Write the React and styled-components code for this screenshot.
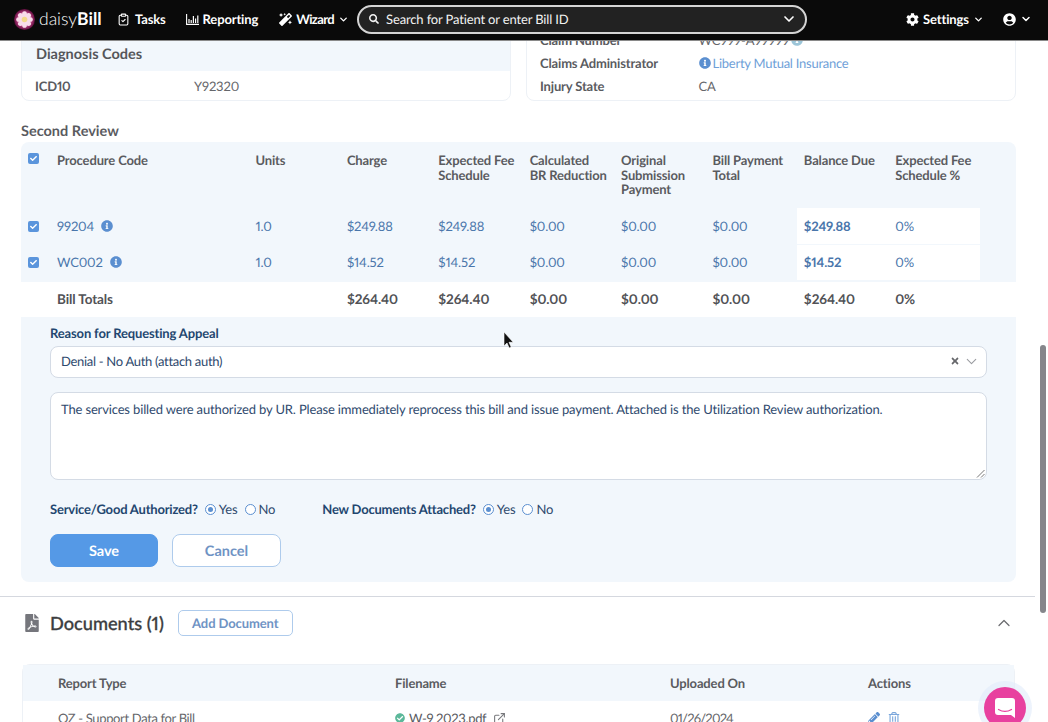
import React from "react";
import styled, { createGlobalStyle } from "styled-components";
import { FaInfoCircle, FaCog, FaUserCircle, FaMagic, FaFilePdf, FaPencilAlt, FaRegTrashAlt, FaCheckCircle, FaCheck, FaTimes, FaSearch } from "react-icons/fa";
import { FiExternalLink, FiChevronDown, FiChevronUp } from "react-icons/fi";
import { LuClipboardCheck } from "react-icons/lu";

const Global = createGlobalStyle`
  html, body { margin: 0; padding: 0; background: #fff; overflow: hidden; }
  * { box-sizing: border-box; }
  body {
    font-family: "Lato", "Liberation Sans", sans-serif; font-size: 13px; color: #55565a;
    letter-spacing: -0.15px; font-variant-numeric: proportional-nums; text-rendering: geometricPrecision;
  }
  button { font-variant-numeric: proportional-nums; text-rendering: geometricPrecision; }
`;

const Shell = styled.div`
  height: 722px; display: flex; flex-direction: column; overflow: hidden; position: relative;
`;
const Nav = styled.header`
  height: 41px; flex: none; background: #0a0a0a; border-bottom: 1px solid #8a8a8a; padding-bottom: 2px;
  display: flex; align-items: center; color: #fff; position: relative; z-index: 2;
`;
const Brand = styled.div`
  display: flex; align-items: center; margin-left: 14px; width: 93px; flex: none; gap: 4px;
`;
const BrandText = styled.span`
  font-size: 17.5px; font-weight: 300; letter-spacing: 0; line-height: 1; color: #fff;
  b { font-weight: 700; }
`;
const NavItem = styled.a`
  display: flex; align-items: center; gap: ${p => p.$gap || 5}px; font-size: 13px; font-weight: 700;
  margin-left: ${p => p.$ml || 0}px; flex: none; color: #fff;
  letter-spacing: ${p => p.$tight ? "-0.6px" : "-0.15px"};
`;
const Search = styled.div`
  width: 450px; height: 29px; margin-left: 8px; flex: none; display: flex; align-items: center;
  background: #222; border: 2px solid #d4d4d4; border-radius: 15px; padding: 0 8px 0 10px; font-size: 13px; color: #f2f2f2; gap: 7px;
`;
const SearchText = styled.span` flex: 1; `;
const Main = styled.main` flex: 1; overflow: hidden; position: relative; `;
const Inner = styled.div` padding: 0 32px 0 21px; `;
const TopCards = styled.div`
  display: grid; grid-template-columns: 490px 490px; gap: 15px; margin-top: -13px;
`;
const Card = styled.section`
  height: 73px; border: 1px solid #edf1f6; border-radius: 8px; overflow: hidden; background: #fff;
`;
const CardHead = styled.div`
  height: 42px; background: #f2f7fc; padding: 17px 14px 0; font-size: 14.5px; font-weight: 700; color: #55565a; line-height: 18px; letter-spacing: 0;
`;
const KV = styled.div`
  display: grid; grid-template-columns: ${p => p.$col}px 1fr; padding-left: 13px; height: ${p => p.$h}px; align-items: center;
`;
const Key = styled.span` font-weight: 700; color: #5a5b5f; `;
const Val = styled.span` color: #66676b; display: flex; align-items: center; gap: 2px; `;
const LinkVal = styled(Val)` color: #6f9fd8; letter-spacing: -0.25px; `;
const RightCard = styled(Card)` padding-top: 0; `;
const Title = styled.h2`
  margin: 22px 0 1px; font-size: 14.5px; line-height: 18px; font-weight: 700; color: #5a5b5f; letter-spacing: 0;
`;
const Panel = styled.div`
  background: #f2f7fc; border-radius: 8px; height: 440px; overflow: hidden;
`;
const COLS = "29px 198.5px repeat(8, 91.4px) 1fr";
const HeadRow = styled.div`
  display: grid; grid-template-columns: ${COLS}; height: 66px; padding-top: 11px;
`;
const HCell = styled.div`
  padding-left: 7px; font-weight: 700; line-height: 14.6px; color: #5a5b5f; font-size: 13px;
`;
const BodyRow = styled.div`
  display: grid; grid-template-columns: ${COLS}; height: 37px; padding-bottom: ${p => p.$pb}px; align-items: stretch;
  & > div { padding-bottom: ${p => p.$pb - 1}px; }
`;
const Cell = styled.div`
  padding-left: 7px; display: flex; align-items: center; gap: 7px; color: #4a76ab;
  background: ${p => p.$white ? "#fff" : "transparent"};
  font-weight: ${p => p.$bold ? 700 : 400};
`;
const CheckCell = styled.div` display: flex; align-items: ${p => p.$top ? "flex-start" : "center"}; padding-left: 7px; `;
const Check = styled.span`
  width: 11px; height: 11px; border-radius: 2px; background: #5b95dc; color: #fff; display: flex; align-items: center; justify-content: center; font-size: 7px;
`;
const TotalRow = styled.div`
  display: grid; grid-template-columns: ${COLS}; height: 35px; background: #fff; align-items: center; padding-bottom: 2px;
`;
const TCell = styled.div` padding-left: 7px; font-weight: 700; color: #515256; font-size: 13.5px; letter-spacing: -0.1px; `;
const Form = styled.div` padding: 8px 29px 15px; `;
const Label = styled.label` display: block; font-weight: 700; color: #23466f; line-height: 16px; font-size: 13px; margin-bottom: 5px; `;
const Select = styled.div`
  height: 32px; width: 937px; background: #fff; border: 1px solid #d4dbe5; border-radius: 8px; padding: 0 6px 2px 10px;
  display: flex; align-items: center; color: #2f4a6e; gap: 3px; letter-spacing: -0.3px;
`;
const SelectVal = styled.span` flex: 1; `;
const TextArea = styled.div`
  width: 937px; height: 88px; margin-top: 14px; background: #fff; border: 1px solid #d4dbe5; border-radius: 8px; padding: 8px 10px;
  color: #2f4a6e; line-height: 16px; position: relative;
`;
const Resize = styled.svg` position: absolute; right: 1px; bottom: 1px; `;
const Radios = styled.div` display: flex; align-items: center; height: 18px; margin-top: 20px; color: #2f4a6e; `;
const RLabel = styled.span` font-weight: 700; color: #23466f; font-size: 13px; letter-spacing: -0.2px; margin-left: ${p => p.$ml || 0}px; `;
const RadioOpt = styled.span` display: flex; align-items: center; gap: 3px; margin-left: 7px; `;
const Dot = styled.span`
  width: 11px; height: 11px; border-radius: 50%; border: 1.5px solid #5b8fd0; display: flex; align-items: center; justify-content: center; background: #fff;
  &::after { content: ""; width: 5px; height: 5px; border-radius: 50%; background: ${p => p.$on ? "#5b8fd0" : "transparent"}; }
`;
const Actions = styled.div` display: flex; gap: 14px; margin-top: 16px; `;
const Btn = styled.button`
  height: 33px; width: ${p => p.$w}px; border-radius: 8px; font: 700 14.5px "Lato", sans-serif; padding-top: 2px;
  border: 1px solid ${p => p.$primary ? "#5599e6" : "#aecbec"}; background: ${p => p.$primary ? "#5599e6" : "#fff"};
  color: ${p => p.$primary ? "#fff" : "#6f93c4"};
`;
const Divider = styled.hr` margin: 14px 13px 0 0; border: 0; height: 1px; background: #d5d8df; `;
const DocsHead = styled.div`
  display: flex; align-items: center; height: 26px; margin: 13px 34px 0 25px;
`;
const PdfIcon = styled(FaFilePdf)` width: 14px; height: 18px; flex: none; `;
const DocsTitle = styled.h3`
  margin: 0 14px 0 11px; font-size: 18.2px; font-weight: 500; color: #3c3d40; letter-spacing: 0; -webkit-text-stroke: 0.3px #3c3d40;
`;
const SmallBtn = styled.button`
  width: 115px; height: 26px; background: #fff; border: 1px solid #aecbec; border-radius: 5px; font: 700 13px "Lato", sans-serif; letter-spacing: -0.1px; color: #6f93c4;
`;
const Spacer = styled.span` flex: 1; `;
const DocsTable = styled.div`
  margin: 28px 33px 0 22px; border: 1px solid #edf1f6; border-radius: 8px 8px 0 0;
`;
const DocsGrid = styled.div`
  display: grid; grid-template-columns: 337px 275px 198px 1fr; padding-left: 35px; align-items: center;
  height: ${p => p.$h}px; background: ${p => p.$head ? "#f2f7fc" : "#fff"};
  font-weight: ${p => p.$head ? 700 : 400}; color: ${p => p.$head ? "#5a5b5f" : "#66676b"};
  letter-spacing: ${p => p.$head ? "-0.15px" : "-0.35px"};
`;
const FileCell = styled.span` display: flex; align-items: center; gap: 4px; color: #5a5b5f; `;
const ExtIcon = styled(FiExternalLink)` margin-left: 3px; `;
const DateText = styled.span` letter-spacing: -0.8px; `;
const ActionCell = styled.span` display: flex; align-items: center; gap: 8px; `;
const Scrollbar = styled.div`
  position: absolute; right: 2px; top: 345px; width: 6px; height: 268px; border-radius: 3px; background: #85868b; z-index: 3;
`;
const Cursor = styled.svg` position: absolute; left: 503px; top: 332px; z-index: 4; `;
const Chat = styled.div`
  position: absolute; left: 984px; top: 687px; width: 42px; height: 42px; border-radius: 50%; background: #e8409f;
  box-shadow: 0 0 0 6px rgba(225,235,250,.6); display: flex; align-items: center; justify-content: center; z-index: 3;
`;

const Logo = () => (
  <svg width="21" height="21" viewBox="0 0 21 21">
    <defs>
      <radialGradient id="lg" cx="50%" cy="50%" r="50%">
        <stop offset="60%" stopColor="#c9488f" />
        <stop offset="100%" stopColor="#5c0c3a" />
      </radialGradient>
    </defs>
    <circle cx="10.5" cy="10.5" r="10.5" fill="url(#lg)" />
    {[0, 45, 90, 135, 180, 225, 270, 315].map(a => (
      <ellipse key={a} cx="10.5" cy="5.6" rx="2.5" ry="3.4" fill="#f8dcea" transform={`rotate(${a} 10.5 10.5)`} />
    ))}
    <circle cx="10.5" cy="10.5" r="2.8" fill="#f3d98a" />
  </svg>
);
const Bars = () => (
  <svg width="13" height="11" viewBox="0 0 13 11" fill="none" stroke="#fff">
    <path d="M.6 0v10.4H13" strokeWidth="1.1" />
    <path d="M3 5v4M5.2 6v3M7.4 2v7M9.6 4.5V9M11.8 1.5V9" strokeWidth="1.2" />
  </svg>
);
const Info = ({ s = 12, c = "#5b8fd0" }) => <FaInfoCircle size={s} color={c} />;
const Caret = ({ s = 11, c = "#fff", w = 3 }) => <FiChevronDown size={s} color={c} strokeWidth={w} />;

const heads = ["Procedure Code", "Units", "Charge", "Expected Fee\nSchedule", "Calculated\nBR Reduction", "Original\nSubmission\nPayment", "Bill Payment\nTotal", "Balance Due", "Expected Fee\nSchedule %"];
const rows = [
  { code: "99204", charge: "$249.88", pb: 1 },
  { code: "WC002", charge: "$14.52", pb: 2 },
];
const totals = ["$264.40", "$264.40", "$0.00", "$0.00", "$0.00", "$264.40", "0%"];

const multi = t => t.split("\n").map((l, i) => <div key={i}>{l}</div>);

export default function App() {
  return (
    <Shell>
      <Global />
      <Nav>
        <Brand><Logo /><BrandText>daisy<b>Bill</b></BrandText></Brand>
        <NavItem $ml={10}><LuClipboardCheck size={13} />Tasks</NavItem>
        <NavItem $ml={20} $gap={4}><Bars />Reporting</NavItem>
        <NavItem $ml={21} $gap={4} $tight><FaMagic size={13} />Wizard<Caret /></NavItem>
        <Search><FaSearch size={10} /><SearchText>Search for Patient or enter Bill ID</SearchText><Caret s={16} w={2.5} /></Search>
        <NavItem $ml={99} $gap={4}><FaCog size={13} />Settings<Caret /></NavItem>
        <NavItem $ml={19} $gap={4}><FaUserCircle size={13} /><Caret s={12} /></NavItem>
      </Nav>
      <Main>
        <Inner>
          <TopCards>
            <Card>
              <CardHead>Diagnosis Codes</CardHead>
              <KV $col={159} $h={30}><Key>ICD10</Key><Val>Y92320</Val></KV>
            </Card>
            <RightCard>
              <KV $col={158.5} $h={22}><Key>Claim Number</Key><Val>WC999-A99999 <Info c="#9cc5d8" /></Val></KV>
              <KV $col={158.5} $h={23}><Key>Claims Administrator</Key><LinkVal><Info />Liberty Mutual Insurance</LinkVal></KV>
              <KV $col={158.5} $h={23}><Key>Injury State</Key><Val>CA</Val></KV>
            </RightCard>
          </TopCards>
          <Title>Second Review</Title>
          <Panel>
            <HeadRow>
              <CheckCell $top><Check><FaCheck /></Check></CheckCell>
              {heads.map(h => <HCell key={h}>{multi(h)}</HCell>)}
            </HeadRow>
            {rows.map(r => (
              <BodyRow key={r.code} $pb={r.pb}>
                <CheckCell><Check><FaCheck /></Check></CheckCell>
                <Cell>{r.code}<Info /></Cell>
                <Cell>1.0</Cell>
                <Cell>{r.charge}</Cell>
                <Cell>{r.charge}</Cell>
                <Cell>$0.00</Cell>
                <Cell>$0.00</Cell>
                <Cell>$0.00</Cell>
                <Cell $white $bold>{r.charge}</Cell>
                <Cell $white>0%</Cell>
              </BodyRow>
            ))}
            <TotalRow>
              <span />
              <TCell>Bill Totals</TCell>
              <span />
              {totals.map((t, i) => <TCell key={i}>{t}</TCell>)}
            </TotalRow>
            <Form>
              <Label>Reason for Requesting Appeal</Label>
              <Select>
                <SelectVal>Denial - No Auth (attach auth)</SelectVal>
                <FaTimes size={10} color="#66676b" />
                <Caret s={17} c="#9a9ca1" w={1.5} />
              </Select>
              <TextArea>
                The services billed were authorized by UR. Please immediately reprocess this bill and issue payment. Attached is the Utilization Review authorization.
                <Resize width="9" height="9" viewBox="0 0 9 9" stroke="#777" fill="none"><path d="M1 8.5 8.5 1M5 8.5 8.5 5" /></Resize>
              </TextArea>
              <Radios>
                <RLabel>Service/Good Authorized?</RLabel>
                <RadioOpt><Dot $on />Yes</RadioOpt>
                <RadioOpt><Dot />No</RadioOpt>
                <RLabel $ml={47}>New Documents Attached?</RLabel>
                <RadioOpt><Dot $on />Yes</RadioOpt>
                <RadioOpt><Dot />No</RadioOpt>
              </Radios>
              <Actions>
                <Btn $primary $w={108}>Save</Btn>
                <Btn $w={109}>Cancel</Btn>
              </Actions>
            </Form>
          </Panel>
        </Inner>
        <Divider />
        <DocsHead>
          <PdfIcon color="#75767c" />
          <DocsTitle>Documents (1)</DocsTitle>
          <SmallBtn>Add Document</SmallBtn>
          <Spacer />
          <FiChevronUp size={20} color="#6b6c70" strokeWidth={1.5} />
        </DocsHead>
        <DocsTable>
          <DocsGrid $head $h={36}><span>Report Type</span><span>Filename</span><span>Uploaded On</span><span>Actions</span></DocsGrid>
          <DocsGrid $h={34}>
            <span>OZ - Support Data for Bill</span>
            <FileCell><FaCheckCircle size={10} color="#5cb89a" />W-9 2023.pdf <ExtIcon size={13} color="#77787c" /></FileCell>
            <DateText>01/26/2024</DateText>
            <ActionCell><FaPencilAlt size={12} color="#5b8fd0" /><FaRegTrashAlt size={12} color="#7ba7dc" /></ActionCell>
          </DocsGrid>
        </DocsTable>
      </Main>
      <Scrollbar />
      <Cursor width="11" height="17" viewBox="0 0 11 17"><path d="M1 0v14l3-3 2.2 5 2-.9L6 10.300h4.200z" fill="#111" stroke="#fff" strokeWidth=".6" /></Cursor>
      <Chat>
        <svg width="20" height="20" viewBox="0 0 20 20" fill="none">
          <path d="M3 0h14a3 3 0 0 1 3 3v17l-4-3H3a3 3 0 0 1-3-3V3a3 3 0 0 1 3-3z" fill="#fff" />
          <path d="M3.500 11.500c4 2.400 9 2.400 13 0" stroke="#e8409f" strokeWidth="1.300" strokeLinecap="round" />
        </svg>
      </Chat>
    </Shell>
  );
}
